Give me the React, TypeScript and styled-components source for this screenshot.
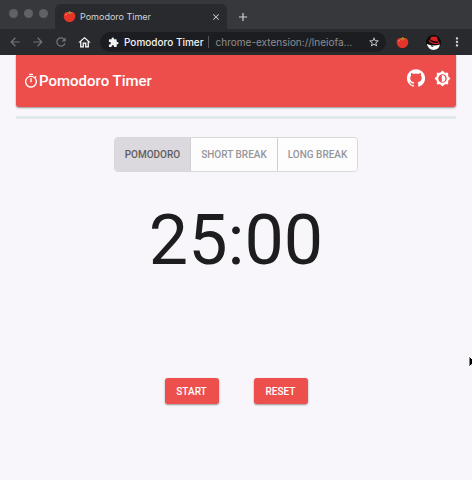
import React, { useState } from 'react';
import styled, { createGlobalStyle } from 'styled-components';
import {
  MdAdd, MdArrowBack, MdArrowForward, MdClose, MdExtension,
  MdMoreVert, MdOutlineHome, MdOutlineTimer, MdRefresh, MdStarBorder,
} from 'react-icons/md';

const GlobalStyle = createGlobalStyle`
  * { box-sizing: border-box; }
  body { margin: 0; background: #f8f6fa; font-family: Roboto, sans-serif; }
  button { font: inherit; cursor: pointer; }
  svg { display: block; flex: none; }
`;

const Window = styled.div`
  position: relative;
  min-height: 100vh;
  overflow: hidden;
`;

const TabStrip = styled.div`
  display: flex;
  height: 29px;
  background: #37383b;
`;

const Lights = styled.div`
  display: flex;
  gap: 6px;
  padding: 9px 7px 0 9px;
`;

const Light = styled.span`
  width: 9px;
  height: 9px;
  border-radius: 50%;
  background: #606164;
`;

const Tab = styled.div`
  display: flex;
  align-items: center;
  width: 172px;
  height: 25px;
  margin-top: 4px;
  padding: 0 6px 0 8px;
  border-radius: 6px 6px 0 0;
  background: #292a2e;
  color: #d2d3d6;
  font: 9px Inter, sans-serif;
`;

const TabTitle = styled.span`
  flex: 1;
  padding-left: 4px;
`;

const ChromeButton = styled.button<{ $color?: string }>`
  display: flex;
  align-items: center;
  justify-content: center;
  flex: none;
  padding: 0;
  border: 0;
  background: none;
  color: ${p => p.$color ?? '#d2d3d6'};
`;

const NewTab = styled(ChromeButton)`
  width: 32px;
  height: 33px;
`;

const Toolbar = styled.div`
  display: flex;
  align-items: center;
  height: 26px;
  padding: 0 8px;
  background: #292a2e;
`;

const Navigation = styled.div`
  display: flex;
  gap: 9px;
  width: 92px;
`;

const Address = styled.div`
  display: flex;
  align-items: center;
  flex: 1;
  min-width: 0;
  height: 20px;
  padding: 0 6px 0 8px;
  border-radius: 10px;
  background: #1c1d20;
  color: #f1f2f4;
  font: 10px Inter, sans-serif;
  white-space: nowrap;
`;

const SiteName = styled.span`
  margin-left: 5px;
  padding-right: 4px;
  border-right: 1px solid #55565a;
  font-weight: 500;
`;

const Url = styled.span`
  flex: 1;
  padding-left: 7px;
  color: #8d8e92;
`;

const Extras = styled.div`
  display: flex;
  align-items: center;
  width: 78px;
  padding-left: 10px;
`;

const Divider = styled.span`
  width: 1px;
  height: 11px;
  margin: 0 8px 0 9px;
  background: #55565a;
`;

const More = styled(ChromeButton)`
  margin-left: 9px;
`;

const Page = styled.main`
  padding: 0 16px;
`;

const AppBar = styled.header`
  display: flex;
  align-items: center;
  height: 52px;
  padding: 0 5px 0 7px;
  border-radius: 0 0 3px 3px;
  background: #ed4e4b;
  color: #fff;
  box-shadow: 0 1px 2px rgba(0, 0, 0, 0.4);
`;

const Title = styled.h1`
  flex: 1;
  margin: 0;
  font-size: 15px;
  font-weight: 500;
`;

const Actions = styled.div`
  display: flex;
  gap: 9px;
  padding-bottom: 6px;
`;

const IconLink = styled.a`
  color: #fff;
`;

const IconButton = styled.button`
  padding: 0;
  border: 0;
  background: none;
  color: #fff;
`;

const Progress = styled.div`
  height: 3px;
  margin-top: 9px;
  background: #e1e8ea;
`;

const Modes = styled.div`
  display: flex;
  width: fit-content;
  margin: 18px auto 0;
  border: 1px solid #d8d7da;
  border-radius: 4px;
  overflow: hidden;
`;

const Mode = styled.button<{ $active: boolean }>`
  height: 33px;
  padding: 0 10px;
  border: 0;
  background: ${p => (p.$active ? '#dbd9dd' : '#fdfdfe')};
  color: ${p => (p.$active ? '#5e5d60' : '#979699')};
  font-size: 10px;
  font-weight: 500;
  & + & { border-left: 1px solid #d0cfd2; }
`;

const Clock = styled.div`
  margin-top: 26px;
  color: #1d1d20;
  font-size: 70px;
  line-height: 84px;
  text-align: center;
`;

const Controls = styled.div`
  display: flex;
  justify-content: center;
  gap: 35px;
  margin-top: 96px;
`;

const Control = styled.button`
  width: 54px;
  height: 26px;
  padding: 0;
  border: 0;
  border-radius: 3px;
  background: #ec4f4c;
  color: #fff;
  font-size: 10px;
  font-weight: 500;
  box-shadow: 0 1px 2px rgba(0, 0, 0, 0.4);
`;

const Pointer = styled.svg`
  position: absolute;
  top: 355px;
  right: -5px;
`;

const Tomato = () => (
  <svg width="13" height="13" viewBox="0 0 13 13" aria-hidden="true">
    <path d="M6.5 2.5C10 .8 12.5 3 12.3 6.5 12 10 9.5 12 6.5 12S1 10 .7 6.5C.5 3 3 .8 6.5 2.5Z" fill="#e5342a" />
    <path d="M2 5Q3 3 4 4L3 6Z" fill="#ff7565" />
    <path d="m4 2 2 .3L6 1h1l.5 1.300 2-.3-1.200 1.200.2 1-1.500-.6-.8 1-.6-1-1.600.4.8-1Z" fill="#b5862f" />
  </svg>
);

const Avatar = () => (
  <svg width="15" height="15" viewBox="0 0 15 15" aria-hidden="true">
    <circle cx="7.500" cy="7.500" r="7.500" fill="#090909" />
    <path d="M.8 9q3 1 4 1 4 1 9.200-.5-1 5-6.500 5.500Q2 14.500.8 9Z" fill="#fff" />
    <path d="M2.500 5.500 4 5.200l1-3.200q2-.8 3.200-.2Q10 .8 11 2.500l1.300 4Q14 7.500 13.500 8.500q-3 1-7 0Q3 7.500 2.500 5.500Z" fill="#da2020" />
    <path d="M4.200 6q3.500 2.500 8 1.800l-.3-1.300Q8 7 4.500 4.800Z" fill="#090909" />
    <path d="M4 9.500q2 1.500 4 1.200l-2 1.500Z" fill="#222" />
  </svg>
);

const GitHub = () => (
  <svg width="18" height="18" viewBox="0 0 24 24" fill="currentColor" aria-hidden="true">
    <path d="M12 .3a12 12 0 0 0-3.8 23.4c.6.1.8-.3.8-.6v-2c-3.3.7-4-1.6-4-1.6-.6-1.4-1.4-1.8-1.4-1.8-1-.7.1-.7.1-.7 1.200 0 1.900 1.200 1.900 1.200 1 1.800 2.800 1.300 3.500 1 0-.8.4-1.300.7-1.600-2.700-.3-5.500-1.300-5.500-6 0-1.200.5-2.300 1.300-3.100-.2-.4-.6-1.600 0-3.200 0 0 1-.3 3.400 1.200a11.500 11.500 0 0 1 6 0c2.300-1.500 3.300-1.200 3.300-1.200.6 1.600.2 2.800 0 3.200.9.8 1.300 1.900 1.300 3.200 0 4.600-2.800 5.600-5.500 5.900.5.4.9 1 .9 2.200v3.300c0 .3.1.7.8.6A12 12 0 0 0 12 .3" />
  </svg>
);

const Brightness = () => (
  <svg width="17" height="17" viewBox="0 0 24 24" fill="currentColor" aria-hidden="true">
    <path
      fillRule="evenodd"
      d="M20 8.700V4h-4.700L12 .7 8.700 4H4v4.700L.7 12 4 15.300V20h4.700l3.300 3.300 3.300-3.300H20v-4.700l3.300-3.300L20 8.700ZM12 18a6 6 0 1 1 0-12 6 6 0 0 1 0 12Z"
    />
    <path d="M11 7a5 5 0 0 1 0 10Z" />
  </svg>
);

const modes = ['POMODORO', 'SHORT BREAK', 'LONG BREAK'];
const durations = ['25:00', '05:00', '15:00'];

export default function App() {
  const [mode, setMode] = useState(0);
  return (
    <Window>
      <GlobalStyle />
      <TabStrip>
        <Lights><Light /><Light /><Light /></Lights>
        <Tab>
          <Tomato />
          <TabTitle>Pomodoro Timer</TabTitle>
          <ChromeButton aria-label="Close tab"><MdClose size={10} /></ChromeButton>
        </Tab>
        <NewTab aria-label="New tab"><MdAdd size={14} /></NewTab>
      </TabStrip>
      <Toolbar>
        <Navigation>
          <ChromeButton aria-label="Back" $color="#737478"><MdArrowBack size={14} /></ChromeButton>
          <ChromeButton aria-label="Forward" $color="#737478"><MdArrowForward size={14} /></ChromeButton>
          <ChromeButton aria-label="Reload" $color="#737478"><MdRefresh size={14} /></ChromeButton>
          <ChromeButton aria-label="Home" $color="#ffffff"><MdOutlineHome size={15} /></ChromeButton>
        </Navigation>
        <Address>
          <MdExtension size={11} />
          <SiteName>Pomodoro Timer</SiteName>
          <Url>chrome-extension://lneiofa...</Url>
          <ChromeButton aria-label="Bookmark"><MdStarBorder size={12} /></ChromeButton>
        </Address>
        <Extras>
          <ChromeButton aria-label="Pomodoro extension"><Tomato /></ChromeButton>
          <Divider />
          <ChromeButton aria-label="Profile"><Avatar /></ChromeButton>
          <More aria-label="Menu"><MdMoreVert size={14} /></More>
        </Extras>
      </Toolbar>
      <Page>
        <AppBar>
          <MdOutlineTimer size={16} />
          <Title>Pomodoro Timer</Title>
          <Actions>
            <IconLink href="#github" aria-label="GitHub"><GitHub /></IconLink>
            <IconButton aria-label="Toggle theme"><Brightness /></IconButton>
          </Actions>
        </AppBar>
        <Progress role="progressbar" aria-label="Elapsed time" aria-valuenow={0} />
        <Modes>
          {modes.map((name, i) => (
            <Mode key={name} $active={i === mode} aria-pressed={i === mode} onClick={() => setMode(i)}>{name}</Mode>
          ))}
        </Modes>
        <Clock>{durations[mode]}</Clock>
        <Controls>
          <Control>START</Control>
          <Control>RESET</Control>
        </Controls>
      </Page>
      <Pointer width="9" height="14" viewBox="0 0 9 14" aria-hidden="true">
        <path d="M1 1v11l2.500-2.500 1.500 3.500 2-1-1.500-3H9Z" fill="#000" stroke="#fff" />
      </Pointer>
    </Window>
  );
}
